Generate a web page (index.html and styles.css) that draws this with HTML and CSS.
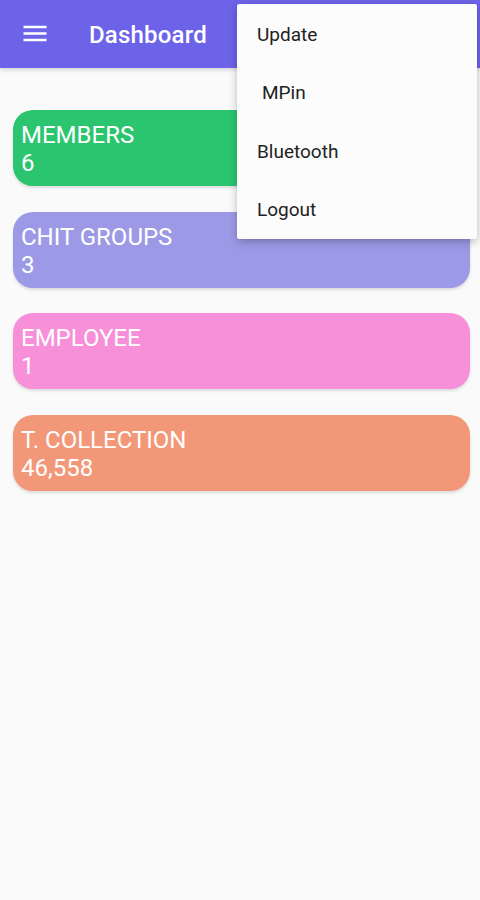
FILE: index.html
```html
<!DOCTYPE html>
<html lang="en">

<head>
  <meta charset="UTF-8">
  <meta name="viewport" content="width=device-width, initial-scale=1.0">
  <title>Dashboard</title>
  <link rel="stylesheet" href="styles.css">
</head>

<body>
  <header class="app-bar">
    <button class="menu-btn" type="button" aria-label="Menu">
      <svg width="24" height="24" viewBox="0 0 24 24">
        <path d="M0.5 4h23M0.5 10.5h23M0.5 17h23" stroke="#fff" stroke-width="2.4" fill="none" />
      </svg>
    </button>
    <h1 class="title">Dashboard</h1>
  </header>

  <main class="cards">
    <div class="card card-members">
      <div class="card-label">MEMBERS</div>
      <div class="card-value">6</div>
    </div>
    <div class="card card-groups">
      <div class="card-label">CHIT GROUPS</div>
      <div class="card-value">3</div>
    </div>
    <div class="card card-employee">
      <div class="card-label">EMPLOYEE</div>
      <div class="card-value">1</div>
    </div>
    <div class="card card-collection">
      <div class="card-label">T. COLLECTION</div>
      <div class="card-value">46,558</div>
    </div>
  </main>

  <ul class="popup-menu">
    <li>Update</li>
    <li class="indent">MPin</li>
    <li>Bluetooth</li>
    <li>Logout</li>
  </ul>
</body>

</html>
```

FILE: styles.css
```css
body {
  margin: 0;
  background-color: #fafafa;
  font-family: Roboto, "Liberation Sans", sans-serif;
  min-height: 900px;
}

.app-bar {
  height: 68px;
  background-color: #6c63e8;
  display: flex;
  align-items: center;
  box-shadow: 0 2px 4px rgba(0, 0, 0, 0.15);
}

.menu-btn {
  background: none;
  border: none;
  padding: 0;
  margin-left: 23px;
  width: 24px;
  height: 24px;
  display: flex;
  margin-top: 2px;
}

.title {
  margin: 2px 0 0 42px;
  color: white;
  font-size: 24px;
  letter-spacing: 0.2px;
  font-weight: 500;
}

.cards {
  display: flex;
  flex-direction: column;
  gap: 25.5px;
  padding: 42px 10px 0 13px;
}

.card {
  height: 76px;
  box-sizing: border-box;
  padding: 11px 8px 9px;
  border-radius: 20px;
  color: white;
  font-size: 24px;
  line-height: 28px;
  box-shadow: 0 2px 3px rgba(0, 0, 0, 0.12);
}

.card-members {
  background-color: #2bc56f;
}

.card-groups {
  background-color: #9c9ae6;
}

.card-employee {
  background-color: #f78fd9;
}

.card-collection {
  background-color: #f39779;
}

.popup-menu {
  position: absolute;
  top: 4px;
  left: 237px;
  width: 240px;
  margin: 0;
  padding: 1px 0 0;
  list-style: none;
  background-color: #fcfcfc;
  border-radius: 2px;
  box-shadow: 0 3px 8px rgba(0, 0, 0, 0.25);
}

.popup-menu li {
  height: 58.5px;
  display: flex;
  align-items: center;
  padding-left: 20px;
  font-size: 19px;
  color: #222;
}

.popup-menu li.indent {
  padding-left: 25px;
}
```
